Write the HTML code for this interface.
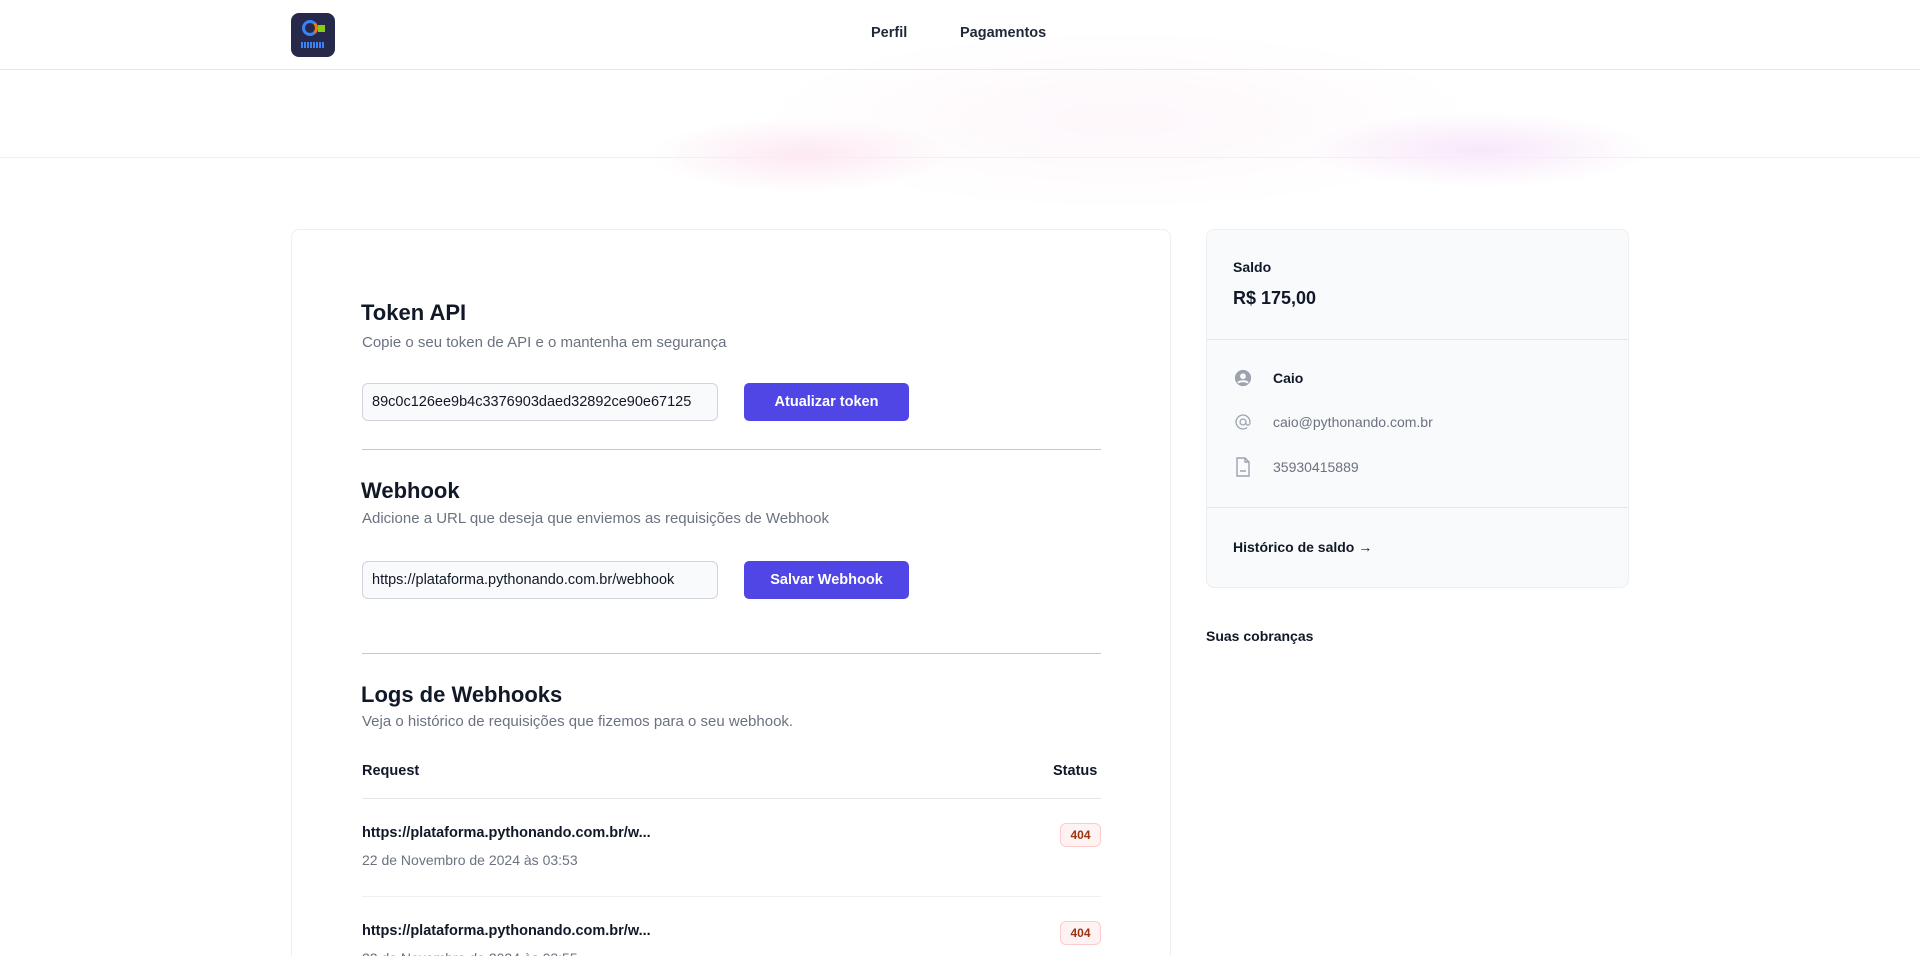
<!DOCTYPE html>
<html style="height:956px;overflow:hidden"><head><meta charset="utf-8"><style>
*{box-sizing:border-box;margin:0;padding:0}
body{width:1920px;height:956px;overflow:hidden;background:#fff;font-family:"Liberation Sans",sans-serif;color:#111827;position:relative}
.abs{position:absolute;white-space:nowrap}
.bg{position:absolute;left:0;top:0;width:1920px;height:956px;background:
radial-gradient(ellipse 200px 50px at 800px 155px,rgba(236,72,153,.12),transparent 75%),
radial-gradient(ellipse 230px 50px at 1480px 150px,rgba(192,38,211,.11),transparent 75%),
radial-gradient(ellipse 480px 120px at 1120px 120px,rgba(236,72,153,.045),transparent 75%);}
.hl{position:absolute;left:0;width:1920px;height:1px;background:#e5e7eb}
.card{position:absolute;left:291px;top:229px;width:880px;height:800px;background:#fff;border:1px solid #eceef1;border-radius:8px}
.h2{font-size:22px;font-weight:bold;color:#111827}
.sub{font-size:15px;color:#6b7280}
.inp{position:absolute;height:38px;border:1px solid #d1d5db;border-radius:6px;background:#f9fafb;font-size:14.5px;padding:10px 9px;overflow:hidden;color:#111827;white-space:nowrap}
.btn{position:absolute;height:38px;background:#4f46e5;color:#fff;border-radius:5px;font-weight:bold;font-size:14.5px;text-align:center;line-height:38px}
.sep{position:absolute;left:362px;width:739px;height:1px}
.badge{position:absolute;width:41px;height:24px;border:1px solid #fecaca;background:#fef2f2;color:#9a3412;border-radius:6px;font-size:12px;font-weight:bold;text-align:center;line-height:22px}
.rc{position:absolute;left:1206px;top:229px;width:423px;height:359px;background:#f9fafb;border:1px solid #eceef1;border-radius:8px}
</style></head><body>
<div class="bg"></div>
<div class="hl" style="top:69px"></div>
<div class="hl" style="top:157px;background:#f0f0f2"></div>
<div class="abs" style="left:291px;top:13px;width:44px;height:44px;border-radius:8px;background:#26294a">
<div style="position:absolute;left:11px;top:7px;width:16px;height:16px;border-radius:50%;border:3px solid #3b82f6;border-right-color:#f97316"></div>
<div style="position:absolute;left:27px;top:12px;width:7px;height:7px;background:#84cc16"></div>
<div style="position:absolute;left:10px;top:29px;width:24px;height:6px;background:repeating-linear-gradient(90deg,#3b82f6 0 2px,transparent 2px 3px)"></div>
</div>
<div class="abs" style="left:871px;top:25px;font-size:14.5px;font-weight:bold;color:#1f2937">Perfil</div>
<div class="abs" style="left:960px;top:25px;font-size:14.5px;font-weight:bold;color:#1f2937">Pagamentos</div>

<div class="card"></div>
<div class="abs h2" style="left:361px;top:300px">Token API</div>
<div class="abs sub" style="left:362px;top:334px">Copie o seu token de API e o mantenha em segurança</div>
<div class="inp" style="left:362px;top:383px;width:356px">89c0c126ee9b4c3376903daed32892ce90e67125</div>
<div class="btn" style="left:744px;top:383px;width:165px">Atualizar token</div>
<div class="sep" style="top:449px;background:#c4c7cc"></div>

<div class="abs h2" style="left:361px;top:478px">Webhook</div>
<div class="abs sub" style="left:362px;top:510px">Adicione a URL que deseja que enviemos as requisições de Webhook</div>
<div class="inp" style="left:362px;top:561px;width:356px">https://plataforma.pythonando.com.br/webhook</div>
<div class="btn" style="left:744px;top:561px;width:165px">Salvar Webhook</div>
<div class="sep" style="top:653px;background:#c4c7cc"></div>

<div class="abs h2" style="left:361px;top:682px">Logs de Webhooks</div>
<div class="abs sub" style="left:362px;top:713px">Veja o histórico de requisições que fizemos para o seu webhook.</div>
<div class="abs" style="left:362px;top:763px;font-size:14.5px;font-weight:bold">Request</div>
<div class="abs" style="left:1053px;top:763px;font-size:14.5px;font-weight:bold">Status</div>
<div class="sep" style="top:798px;background:#e5e7eb"></div>
<div class="abs" style="left:362px;top:825px;font-size:14.5px;font-weight:bold;color:#111827">https://plataforma.pythonando.com.br/w...</div>
<div class="abs sub" style="left:362px;top:852px;font-size:14px">22 de Novembro de 2024 às 03:53</div>
<div class="badge" style="left:1060px;top:823px">404</div>
<div class="sep" style="top:896px;background:#eef0f2"></div>
<div class="abs" style="left:362px;top:923px;font-size:14.5px;font-weight:bold;color:#111827">https://plataforma.pythonando.com.br/w...</div>
<div class="abs sub" style="left:362px;top:950px;font-size:14px">22 de Novembro de 2024 às 03:55</div>
<div class="badge" style="left:1060px;top:921px">404</div>

<div class="rc"></div>
<div class="abs" style="left:1233px;top:259px;font-size:14px;font-weight:bold">Saldo</div>
<div class="abs" style="left:1233px;top:288px;font-size:18px;font-weight:bold">R$ 175,00</div>
<div class="abs" style="left:1207px;top:339px;width:421px;height:1px;background:#e5e7eb"></div>
<svg class="abs" style="left:1234px;top:369px" width="18" height="18" viewBox="0 0 20 20"><circle cx="10" cy="10" r="9" fill="#9ca3af"/><circle cx="10" cy="8" r="3.2" fill="#f9fafb"/><path d="M4.5 15.5c1.5-2.5 9.5-2.5 11 0" stroke="#f9fafb" stroke-width="2.2" fill="none"/></svg>
<div class="abs" style="left:1273px;top:370px;font-size:14px;font-weight:bold">Caio</div>
<svg class="abs" style="left:1234px;top:413px" width="18" height="18" viewBox="0 0 20 20" fill="none" stroke="#9ca3af" stroke-width="1.4"><circle cx="10" cy="10" r="3.3"/><path d="M13.3 10v1.3a2.2 2.2 0 0 0 4.4 0V10a7.7 7.7 0 1 0-3 6.1"/></svg>
<div class="abs" style="left:1273px;top:414px;font-size:14px;color:#6b7280">caio@pythonando.com.br</div>
<svg class="abs" style="left:1235px;top:457px" width="16" height="20" viewBox="0 0 16 20" fill="none" stroke="#9ca3af" stroke-width="1.4"><path d="M2 1h8l4 4v14H2z"/><path d="M10 1v4h4M5 14h6"/></svg>
<div class="abs" style="left:1273px;top:459px;font-size:14px;color:#6b7280">35930415889</div>
<div class="abs" style="left:1207px;top:507px;width:421px;height:1px;background:#e5e7eb"></div>
<div class="abs" style="left:1233px;top:539px;font-size:14px;font-weight:bold">Histórico de saldo →</div>
<div class="abs" style="left:1206px;top:628px;font-size:14px;font-weight:bold">Suas cobranças</div>
</body></html>
